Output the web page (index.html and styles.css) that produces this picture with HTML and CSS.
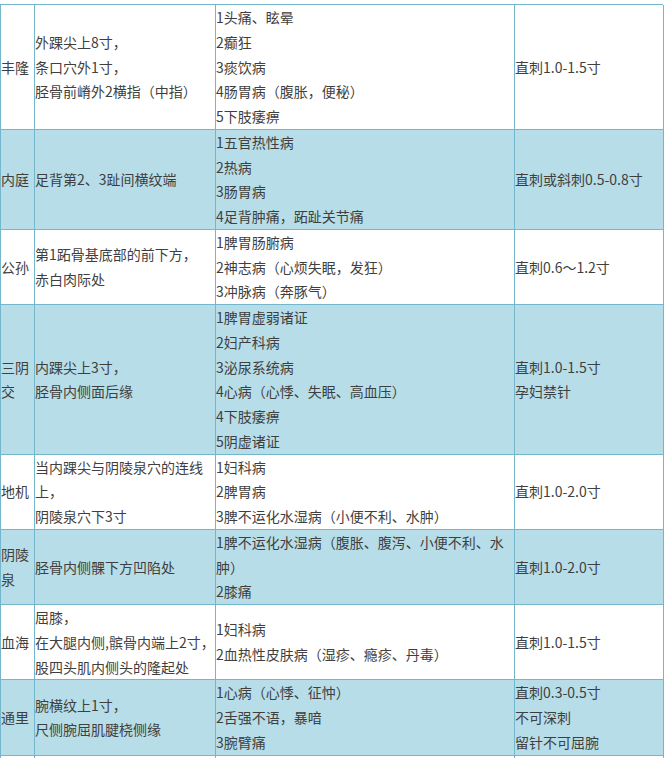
FILE: index.html
```html
<!DOCTYPE html>
<html lang="zh-CN">
<head>
<meta charset="utf-8">
<title>穴位表</title>
<link rel="stylesheet" href="styles.css">
</head>
<body>
<div class="sheet">
  <div class="row">
    <div class="cell"><div>丰隆</div></div>
    <div class="cell"><div>外踝尖上8寸，<br>条口穴外1寸，<br>胫骨前嵴外2横指（中指）</div></div>
    <div class="cell"><div>1头痛、眩晕<br>2癫狂<br>3痰饮病<br>4肠胃病（腹胀，便秘）<br>5下肢痿痹</div></div>
    <div class="cell"><div>直刺1.0-1.5寸</div></div>
  </div>
  <div class="row blue">
    <div class="cell"><div>内庭</div></div>
    <div class="cell"><div>足背第2、3趾间横纹端</div></div>
    <div class="cell"><div>1五官热性病<br>2热病<br>3肠胃病<br>4足背肿痛，跖趾关节痛</div></div>
    <div class="cell"><div>直刺或斜刺0.5-0.8寸</div></div>
  </div>
  <div class="row">
    <div class="cell"><div>公孙</div></div>
    <div class="cell"><div>第1跖骨基底部的前下方，<br>赤白肉际处</div></div>
    <div class="cell"><div>1脾胃肠腑病<br>2神志病（心烦失眠，发狂）<br>3冲脉病（奔豚气）</div></div>
    <div class="cell"><div>直刺0.6～1.2寸</div></div>
  </div>
  <div class="row blue">
    <div class="cell"><div>三阴交</div></div>
    <div class="cell"><div>内踝尖上3寸，<br>胫骨内侧面后缘</div></div>
    <div class="cell"><div>1脾胃虚弱诸证<br>2妇产科病<br>3泌尿系统病<br>4心病（心悸、失眠、高血压）<br>4下肢痿痹<br>5阴虚诸证</div></div>
    <div class="cell"><div>直刺1.0-1.5寸<br>孕妇禁针</div></div>
  </div>
  <div class="row">
    <div class="cell"><div>地机</div></div>
    <div class="cell"><div>当内踝尖与阴陵泉穴的连线上，<br>阴陵泉穴下3寸</div></div>
    <div class="cell"><div>1妇科病<br>2脾胃病<br>3脾不运化水湿病（小便不利、水肿）</div></div>
    <div class="cell"><div>直刺1.0-2.0寸</div></div>
  </div>
  <div class="row blue">
    <div class="cell"><div>阴陵泉</div></div>
    <div class="cell"><div>胫骨内侧髁下方凹陷处</div></div>
    <div class="cell"><div>1脾不运化水湿病（腹胀、腹泻、小便不利、水肿）<br>2膝痛</div></div>
    <div class="cell"><div>直刺1.0-2.0寸</div></div>
  </div>
  <div class="row">
    <div class="cell"><div>血海</div></div>
    <div class="cell"><div>屈膝，<br><span class="nw">在大腿内侧,髌骨内端上2寸，</span><br>股四头肌内侧头的隆起处</div></div>
    <div class="cell"><div>1妇科病<br>2血热性皮肤病（湿疹、瘾疹、丹毒）</div></div>
    <div class="cell"><div>直刺1.0-1.5寸</div></div>
  </div>
  <div class="row blue">
    <div class="cell"><div>通里</div></div>
    <div class="cell"><div>腕横纹上1寸，<br>尺侧腕屈肌腱桡侧缘</div></div>
    <div class="cell"><div>1心病（心悸、征忡）<br>2舌强不语，暴喑<br>3腕臂痛</div></div>
    <div class="cell"><div>直刺0.3-0.5寸<br>不可深刺<br>留针不可屈腕</div></div>
  </div>
  <div class="row">
    <div class="cell"><div>&nbsp;</div></div>
    <div class="cell"><div>&nbsp;</div></div>
    <div class="cell"><div>&nbsp;</div></div>
    <div class="cell"><div>&nbsp;</div></div>
  </div>
</div>
</body>
</html>
```

FILE: styles.css
```css
html, body {
  margin: 0;
  padding: 0;
  background: #ffffff;
}
body {
  padding-top: 4px;
  font-family: "Noto Sans CJK SC", "Noto Sans", sans-serif;
  font-size: 14px;
  line-height: 24.75px;
  color: #3f3f3f;
}
.sheet {
  width: 663px;
  border-left: 1px solid #74b6cc;
  border-top: 1px solid #74b6cc;
  box-sizing: border-box;
}
.row {
  display: grid;
  grid-template-columns: 34px 181px 299px 149px;
  background: #ffffff;
}
.row.blue {
  background: #b7dde8;
}
.cell {
  display: flex;
  align-items: center;
  border-right: 1px solid #74b6cc;
  border-bottom: 1px solid #74b6cc;
  box-sizing: border-box;
  min-width: 0;
}
.cell > div {
  width: 100%;
}
.nw {
  white-space: nowrap;
}
```
